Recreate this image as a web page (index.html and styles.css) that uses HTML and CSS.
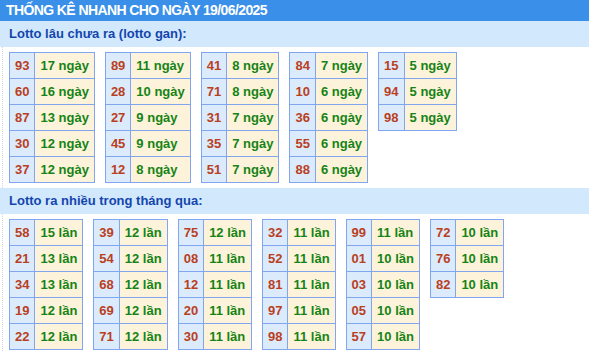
FILE: index.html
```html
<!DOCTYPE html>
<html lang="vi">
<head>
<meta charset="utf-8">
<title>Thống kê nhanh</title>
<link rel="stylesheet" href="styles.css">
</head>
<body>
<div class="box">
  <div class="title">THỐNG KÊ NHANH CHO NGÀY 19/06/2025</div>
  <div class="sub">Lotto lâu chưa ra (lotto gan):</div>
  <div class="tables">
    <table><tr><td class="n">93</td><td class="v">17 ngày</td></tr><tr><td class="n">60</td><td class="v">16 ngày</td></tr><tr><td class="n">87</td><td class="v">13 ngày</td></tr><tr><td class="n">30</td><td class="v">12 ngày</td></tr><tr><td class="n">37</td><td class="v">12 ngày</td></tr></table>
    <table><tr><td class="n">89</td><td class="v">11 ngày</td></tr><tr><td class="n">28</td><td class="v">10 ngày</td></tr><tr><td class="n">27</td><td class="v">9 ngày</td></tr><tr><td class="n">45</td><td class="v">9 ngày</td></tr><tr><td class="n">12</td><td class="v">8 ngày</td></tr></table>
    <table><tr><td class="n">41</td><td class="v">8 ngày</td></tr><tr><td class="n">71</td><td class="v">8 ngày</td></tr><tr><td class="n">31</td><td class="v">7 ngày</td></tr><tr><td class="n">35</td><td class="v">7 ngày</td></tr><tr><td class="n">51</td><td class="v">7 ngày</td></tr></table>
    <table><tr><td class="n">84</td><td class="v">7 ngày</td></tr><tr><td class="n">10</td><td class="v">6 ngày</td></tr><tr><td class="n">36</td><td class="v">6 ngày</td></tr><tr><td class="n">55</td><td class="v">6 ngày</td></tr><tr><td class="n">88</td><td class="v">6 ngày</td></tr></table>
    <table><tr><td class="n">15</td><td class="v">5 ngày</td></tr><tr><td class="n">94</td><td class="v">5 ngày</td></tr><tr><td class="n">98</td><td class="v">5 ngày</td></tr></table>
  </div>
  <div class="sub">Lotto ra nhiều trong tháng qua:</div>
  <div class="tables">
    <table><tr><td class="n">58</td><td class="v">15 lần</td></tr><tr><td class="n">21</td><td class="v">13 lần</td></tr><tr><td class="n">34</td><td class="v">13 lần</td></tr><tr><td class="n">19</td><td class="v">12 lần</td></tr><tr><td class="n">22</td><td class="v">12 lần</td></tr></table>
    <table><tr><td class="n">39</td><td class="v">12 lần</td></tr><tr><td class="n">54</td><td class="v">12 lần</td></tr><tr><td class="n">68</td><td class="v">12 lần</td></tr><tr><td class="n">69</td><td class="v">12 lần</td></tr><tr><td class="n">71</td><td class="v">12 lần</td></tr></table>
    <table><tr><td class="n">75</td><td class="v">12 lần</td></tr><tr><td class="n">08</td><td class="v">11 lần</td></tr><tr><td class="n">12</td><td class="v">11 lần</td></tr><tr><td class="n">20</td><td class="v">11 lần</td></tr><tr><td class="n">30</td><td class="v">11 lần</td></tr></table>
    <table><tr><td class="n">32</td><td class="v">11 lần</td></tr><tr><td class="n">52</td><td class="v">11 lần</td></tr><tr><td class="n">81</td><td class="v">11 lần</td></tr><tr><td class="n">97</td><td class="v">11 lần</td></tr><tr><td class="n">98</td><td class="v">11 lần</td></tr></table>
    <table><tr><td class="n">99</td><td class="v">11 lần</td></tr><tr><td class="n">01</td><td class="v">10 lần</td></tr><tr><td class="n">03</td><td class="v">10 lần</td></tr><tr><td class="n">05</td><td class="v">10 lần</td></tr><tr><td class="n">57</td><td class="v">10 lần</td></tr></table>
    <table><tr><td class="n">72</td><td class="v">10 lần</td></tr><tr><td class="n">76</td><td class="v">10 lần</td></tr><tr><td class="n">82</td><td class="v">10 lần</td></tr></table>
  </div>
</div>
</body>
</html>
```

FILE: styles.css
```css
html, body {
  margin: 0;
  padding: 0;
  background: #ffffff;
}
body {
  font-family: "Liberation Sans", Arial, sans-serif;
  font-weight: bold;
}
.box {
  width: 589px;
}
.title {
  height: 21px;
  line-height: 21px;
  padding-left: 6px;
  background: #3a8fe8;
  color: #ffffff;
  font-size: 14px;
  letter-spacing: -0.6px;
}
.sub {
  height: 26px;
  line-height: 26px;
  padding-left: 9px;
  background: #d2e8fc;
  color: #1346ad;
  font-size: 13px;
}
.tables {
  display: flex;
  align-items: flex-start;
  gap: 10px;
  padding: 5px 9px;
  border-left: 1px dotted #c9d6e4;
  margin-left: 2px;
  padding-left: 6px;
}
table {
  border-collapse: collapse;
  border: 1px solid #7fa6ee;
}
td {
  border: 1px solid #7fa6ee;
  padding: 0 5px;
  height: 25px;
  line-height: 25px;
  font-size: 13px;
  text-align: center;
  white-space: nowrap;
}
td.n {
  background: #dcebfc;
  color: #b8401e;
}
td.v {
  background: #fdf3da;
  color: #168316;
  text-align: left;
}
```
